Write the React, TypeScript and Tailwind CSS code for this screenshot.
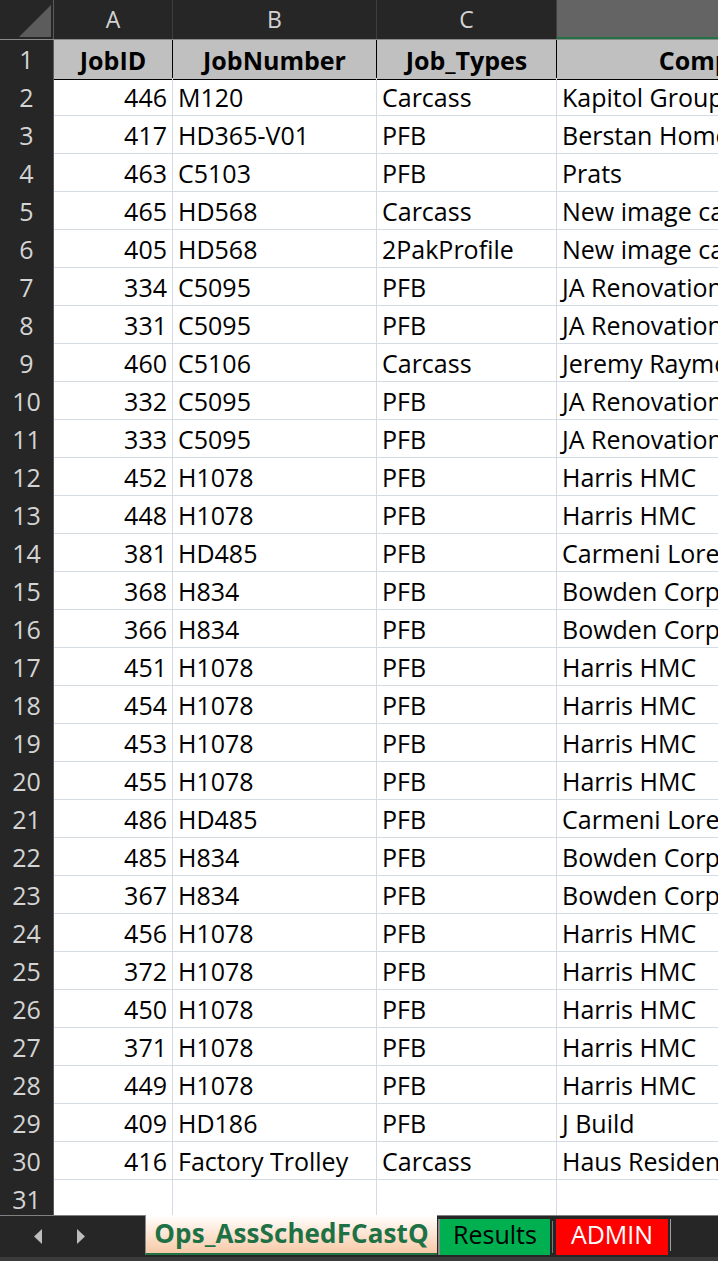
import React from "react";

type Row = [number, string, string, string];

const ROWS: Row[] = [
  [446, "M120", "Carcass", "Kapitol Group"],
  [417, "HD365-V01", "PFB", "Berstan Homes"],
  [463, "C5103", "PFB", "Prats"],
  [465, "HD568", "Carcass", "New image cabinets"],
  [405, "HD568", "2PakProfile", "New image cabinets"],
  [334, "C5095", "PFB", "JA Renovations"],
  [331, "C5095", "PFB", "JA Renovations"],
  [460, "C5106", "Carcass", "Jeremy Raymond"],
  [332, "C5095", "PFB", "JA Renovations"],
  [333, "C5095", "PFB", "JA Renovations"],
  [452, "H1078", "PFB", "Harris HMC"],
  [448, "H1078", "PFB", "Harris HMC"],
  [381, "HD485", "PFB", "Carmeni Lorenzo"],
  [368, "H834", "PFB", "Bowden Corp"],
  [366, "H834", "PFB", "Bowden Corp"],
  [451, "H1078", "PFB", "Harris HMC"],
  [454, "H1078", "PFB", "Harris HMC"],
  [453, "H1078", "PFB", "Harris HMC"],
  [455, "H1078", "PFB", "Harris HMC"],
  [486, "HD485", "PFB", "Carmeni Lorenzo"],
  [485, "H834", "PFB", "Bowden Corp"],
  [367, "H834", "PFB", "Bowden Corp"],
  [456, "H1078", "PFB", "Harris HMC"],
  [372, "H1078", "PFB", "Harris HMC"],
  [450, "H1078", "PFB", "Harris HMC"],
  [371, "H1078", "PFB", "Harris HMC"],
  [449, "H1078", "PFB", "Harris HMC"],
  [409, "HD186", "PFB", "J Build"],
  [416, "Factory Trolley", "Carcass", "Haus Residential"],
];

const GRID = "grid grid-cols-[54px_119px_204px_180px_396px]";
const ROWNUM =
  "flex items-center justify-center pt-[1px] bg-[#262626] text-[#d4d4d4] border-r border-r-[#5a5a5a] border-b border-b-[#4a4a4a]";
const CELL =
  "h-[38px] leading-[38px] px-[5px] whitespace-nowrap overflow-hidden border-r border-b border-[#d5dbe5] text-black";
const HEAD =
  "flex items-center justify-center pt-[2px] bg-[#c0c0c0] font-bold border-b border-black whitespace-nowrap overflow-hidden";

const Spreadsheet = () => (
  <div className="flex-1 overflow-hidden bg-white">
    {/* column letters */}
    <div className={`${GRID} h-[40px] bg-[#262626] border-b border-b-[#8a8a8a] text-[23px] text-[#d4d4d4]`}>
      <div className="relative border-r border-r-[#5a5a5a]">
        <svg className="absolute right-[2px] bottom-[2px]" width="32" height="32" viewBox="0 0 32 32">
          <polygon points="32,0 32,32 0,32" fill="#5c5c5c" />
        </svg>
      </div>
      <div className="flex items-center justify-center border-r border-r-[#3e3e3e]">A</div>
      <div className="flex items-center justify-center border-r border-r-[#3e3e3e]">B</div>
      <div className="flex items-center justify-center border-r border-r-[#3e3e3e]">C</div>
      <div className="flex items-center justify-center bg-[#646464] border-b-2 border-b-[#217346]">D</div>
    </div>

    {/* header row 1 */}
    <div className={`${GRID} h-[38px]`}>
      <div className={ROWNUM}>1</div>
      <div className={`${HEAD} border-r`}>JobID</div>
      <div className={`${HEAD} border-r`}>JobNumber</div>
      <div className={`${HEAD} border-r`}>Job_Types</div>
      <div className={HEAD}>CompanyName</div>
    </div>

    {ROWS.map((r, i) => (
      <div key={i} className={`${GRID} h-[38px]`}>
        <div className={ROWNUM}>{i + 2}</div>
        <div className={`${CELL} text-right`}>{r[0]}</div>
        <div className={CELL}>{r[1]}</div>
        <div className={CELL}>{r[2]}</div>
        <div className={CELL}>{r[3]}</div>
      </div>
    ))}

    <div className={`${GRID} h-[38px]`}>
      <div className={ROWNUM}>31</div>
      <div className={CELL}></div>
      <div className={CELL}></div>
      <div className={CELL}></div>
      <div className={CELL}></div>
    </div>
  </div>
);

const SheetTabs = () => (
  <div className="h-[46px] shrink-0 flex flex-col bg-[#262626] border-t border-[#808080]">
    <div className="flex h-[40px] items-stretch">
      <div className="w-[145px] flex items-center">
        <svg className="ml-[34px]" width="8" height="15" viewBox="0 0 8 15">
          <polygon points="8,0 8,15 0,7.5" fill="#bdbdbd" />
        </svg>
        <svg className="ml-[35px]" width="8" height="15" viewBox="0 0 8 15">
          <polygon points="0,0 0,15 8,7.5" fill="#bdbdbd" />
        </svg>
      </div>
      <div className="-mt-px w-[292px] h-[40px] flex items-center justify-center pb-[2px] border-l border-[#8a8a8a] border-b-2 border-b-[#217346] bg-gradient-to-b from-white to-[#f7c9a6] text-[#1e7145] font-bold text-[26px] tracking-[0.1px]">
        Ops_AssSchedFCastQ
      </div>
      <div className="flex items-end pb-[1px]">
        <div className="ml-[1px] h-[36px] w-[112px] flex items-center justify-center pb-[4px] border-l-2 border-[#8a8a8a] bg-[#00b050] text-black">
          Results
        </div>
        <div className="w-px h-[32px] bg-[#7a7a7a] ml-[2px] mb-[2px]" />
        <div className="ml-[3px] h-[36px] w-[112px] flex items-center justify-center pb-[4px] bg-[#ff0000] text-white">
          ADMIN
        </div>
        <div className="w-px h-[32px] bg-[#a0a0a0] ml-[2px] mb-[4px]" />
      </div>
    </div>
    <div className="flex-1 bg-[#3a3a3a] mt-[1px]" />
  </div>
);

export default function App() {
  return (
    <div
      className="h-screen w-full flex flex-col overflow-hidden text-[25px] bg-[#262626]"
      style={{ fontFamily: '"Open Sans", "Noto Sans", sans-serif' }}
    >
      <Spreadsheet />
      <SheetTabs />
    </div>
  );
}
